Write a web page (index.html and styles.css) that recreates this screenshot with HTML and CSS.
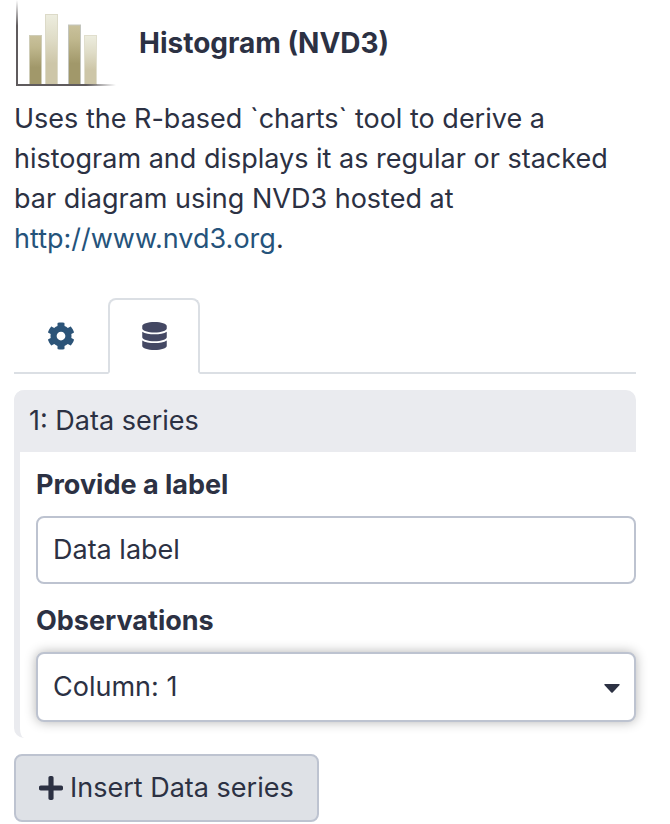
FILE: index.html
```html
<!DOCTYPE html>
<html lang="en">
<head>
<meta charset="utf-8">
<meta name="viewport" content="width=device-width, initial-scale=1">
<title>Histogram (NVD3)</title>
<link rel="stylesheet" href="styles.css">
</head>
<body>
<main class="panel">
  <header class="heading">
    <svg class="logo" width="102" height="86" viewBox="0 0 102 86" aria-hidden="true">
      <defs>
        <linearGradient id="dark" x1="0" y1="0" x2="0" y2="1">
          <stop offset="0" stop-color="#c9c19c"/>
          <stop offset=".25" stop-color="#bfb78d"/>
          <stop offset=".65" stop-color="#a1986a"/>
          <stop offset="1" stop-color="#a1986a"/>
        </linearGradient>
        <linearGradient id="light" x1="0" y1="0" x2="0" y2="1">
          <stop offset="0" stop-color="#ededdf"/>
          <stop offset=".35" stop-color="#dfdcc7"/>
          <stop offset=".7" stop-color="#cdc6a8"/>
          <stop offset="1" stop-color="#cdc6a8"/>
        </linearGradient>
        <linearGradient id="axis-y" x1="0" y1="0" x2="0" y2="1">
          <stop offset="0" stop-color="#5f5b5d" stop-opacity="0"/>
          <stop offset=".3" stop-color="#5f5b5d"/>
        </linearGradient>
        <linearGradient id="axis-x" x1="0" y1="0" x2="1" y2="0">
          <stop offset=".7" stop-color="#5f5b5d"/>
          <stop offset="1" stop-color="#5f5b5d" stop-opacity="0"/>
        </linearGradient>
      </defs>
      <g stroke-width="1">
        <rect x="15.5" y="35.5" width="12" height="49" fill="url(#dark)" stroke="#cfcdb8"/>
        <rect x="31.500" y="14.500" width="12" height="70" fill="url(#light)" stroke="#dcdac8"/>
        <rect x="54.500" y="25" width="12" height="59.500" fill="url(#dark)" stroke="#c3c5bd"/>
        <rect x="70.500" y="35.500" width="12" height="49" fill="url(#light)" stroke="#e0decd"/>
      </g>
      <rect x="2" y="0" width="2" height="86" fill="url(#axis-y)"/>
      <rect x="2" y="84" width="100" height="2" fill="url(#axis-x)"/>
    </svg>
    <h1 class="title">Histogram (NVD3)</h1>
  </header>

  <p class="description">Uses the R-based `charts` tool to derive a histogram and displays it as regular or stacked bar diagram using NVD3 hosted at <a class="link" href="http://www.nvd3.org">http://www.nvd3.org</a>.</p>

  <nav class="tabs" role="tablist">
    <button class="tab" type="button" role="tab" aria-selected="false" aria-label="Settings">
      <svg width="28" height="28" viewBox="0 0 512 512" aria-hidden="true"><path fill="currentColor" d="M487.400 315.700l-42.600-24.600c4.300-23.200 4.300-47 0-70.200l42.600-24.600c4.900-2.800 7.100-8.600 5.500-14-11.100-35.600-30-67.800-54.700-94.600-3.800-4.100-10-5.100-14.800-2.300L380.800 110c-17.900-15.400-38.500-27.300-60.800-35.100V25.800c0-5.600-3.900-10.500-9.400-11.700-36.700-8.200-74.300-7.800-109.200 0-5.500 1.200-9.400 6.100-9.400 11.700V75c-22.200 7.900-42.800 19.800-60.800 35.100L88.700 85.500c-4.900-2.800-11-1.900-14.800 2.300-24.700 26.700-43.600 58.900-54.700 94.600-1.700 5.400.6 11.200 5.500 14L67.300 221c-4.300 23.200-4.300 47 0 70.200l-42.600 24.600c-4.900 2.800-7.100 8.600-5.500 14 11.100 35.600 30 67.800 54.700 94.600 3.800 4.100 10 5.100 14.800 2.300l42.600-24.600c17.900 15.400 38.500 27.300 60.800 35.100v49.200c0 5.600 3.900 10.500 9.400 11.700 36.700 8.200 74.300 7.800 109.200 0 5.500-1.200 9.400-6.100 9.400-11.700v-49.200c22.200-7.900 42.800-19.800 60.800-35.100l42.600 24.600c4.900 2.800 11 1.900 14.800-2.300 24.700-26.700 43.600-58.900 54.700-94.600 1.500-5.500-.7-11.300-5.600-14.100zM256 336c-44.100 0-80-35.900-80-80s35.900-80 80-80 80 35.900 80 80-35.900 80-80 80z"/></svg>
    </button>
    <button class="tab tab-active" type="button" role="tab" aria-selected="true" aria-label="Data">
      <svg width="25" height="28" viewBox="0 0 448 512" aria-hidden="true"><path fill="currentColor" d="M448 73.100v45.700C448 159.100 347.700 192 224 192S0 159.100 0 118.900V73.100C0 32.900 100.300 0 224 0s224 32.900 224 73.100zM448 176v102.900C448 319.100 347.700 352 224 352S0 319.100 0 278.900V176c48.100 33.100 136.200 48.600 224 48.600S399.900 209.100 448 176zm0 160v102.900C448 479.100 347.700 512 224 512S0 479.100 0 438.900V336c48.100 33.100 136.200 48.600 224 48.600S399.900 369.100 448 336z"/></svg>
    </button>
  </nav>

  <section class="series">
    <h2 class="series-title">1: Data series</h2>
    <div class="series-body">
      <label class="label" for="series-label">Provide a label</label>
      <input class="field" id="series-label" type="text" value="Data label">
      <label class="label" for="observations">Observations</label>
      <div class="select">
        <select class="field field-raised" id="observations">
          <option>Column: 1</option>
        </select>
        <svg class="caret" width="16" height="9" viewBox="0 0 16 9" aria-hidden="true"><path fill="currentColor" d="M1 0h14q1 0 .6 1L8.700 8.500q-.7.700-1.400 0L.4 1Q0 0 1 0z"/></svg>
      </div>
    </div>
  </section>

  <button class="insert" type="button">
    <svg width="24" height="28" viewBox="0 0 448 512" aria-hidden="true"><path fill="currentColor" d="M416 208H272V64c0-17.700-14.300-32-32-32h-32c-17.700 0-32 14.300-32 32v144H32c-17.700 0-32 14.300-32 32v32c0 17.700 14.300 32 32 32h144v144c0 17.700 14.300 32 32 32h32c17.700 0 32-14.300 32-32V304h144c17.700 0 32-14.300 32-32v-32c0-17.700-14.300-32-32-32z"/></svg>
    <span>Insert Data series</span>
  </button>
</main>
</body>
</html>
```
FILE: styles.css
```css
* {
  box-sizing: border-box;
}

body {
  margin: 0;
  background: #fff;
  color: #2c3143;
  font: 400 27px/40px Inter, "Liberation Sans", sans-serif;
}

button,
input,
select {
  margin: 0;
  color: inherit;
  font: inherit;
}

svg {
  display: block;
}

.panel {
  padding: 0 34px 2px 14px;
}

.heading {
  display: flex;
  align-items: center;
  gap: 23px;
}

.title {
  margin: 0;
  font-size: 28px;
  font-weight: 700;
}

.description {
  margin: 13px 0 39px;
}

.link {
  color: #25537b;
  text-decoration: none;
}

.tabs {
  display: flex;
  margin-bottom: 16px;
  border-bottom: 2px solid #dbdfe4;
}

.tab {
  display: flex;
  align-items: center;
  justify-content: center;
  min-width: 92px;
  height: 76px;
  margin-bottom: -2px;
  padding: 0;
  border: 2px solid transparent;
  border-radius: 8px 8px 0 0;
  background: none;
  color: #2c5478;
}

.tab:first-child {
  min-width: 94px;
}

.tab-active {
  border-color: #dbdfe4 #dbdfe4 #fff;
  background: #fff;
  color: #444863;
}

.series {
  margin-bottom: 16px;
  border-left: 6px solid #eaebef;
  border-radius: 10px;
}

.series-title {
  margin: 0 0 0 -6px;
  padding: 11px 15px;
  border-radius: 10px 10px 0 0;
  background: #eaebef;
  font-size: 27px;
  font-weight: 400;
}

.series-body {
  padding: 13px 0 16px 16px;
}

.label {
  display: block;
  margin-bottom: 11px;
  font-weight: 700;
}

.field {
  display: block;
  width: 100%;
  height: 68px;
  padding: 0 15px 2px;
  border: 2px solid #bdc3d0;
  border-radius: 8px;
  background: #fff;
}

.field + .label {
  margin-top: 17px;
}

.select {
  position: relative;
}

.field-raised {
  height: 70px;
  padding-bottom: 0;
  appearance: none;
  box-shadow: 0 0 12px rgba(0, 0, 0, 0.3);
}

.caret {
  position: absolute;
  top: 32px;
  right: 16px;
  pointer-events: none;
}

.insert {
  display: inline-flex;
  align-items: center;
  gap: 7px;
  height: 68px;
  padding: 0 23px;
  border: 2px solid #bdc3d0;
  border-radius: 8px;
  background: #dee1e6;
}
```
